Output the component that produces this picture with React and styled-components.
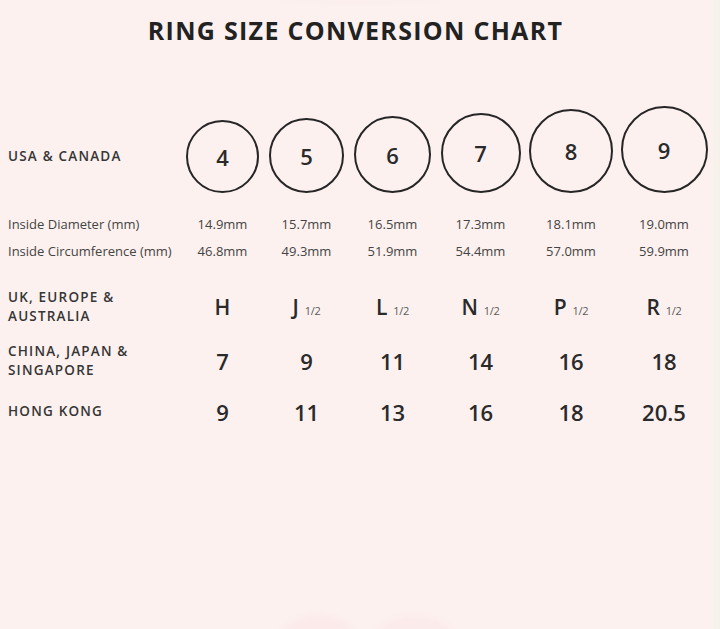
import React from 'react';
import styled, { createGlobalStyle } from 'styled-components';

const GlobalStyle = createGlobalStyle`
    html, body {
        margin: 0;
        padding: 0;
    }
    body {
        font-family: "Open Sans", "Liberation Sans", sans-serif;
        color: #2a2a2a;
    }
`;

const COLUMNS = '181px 83px 85px 87px 89px 92px 94px';

const Page = styled.div`
    width: 720px;
    height: 629px;
    overflow: hidden;
    display: flex;
    background:
        linear-gradient(to right, transparent 713px, #f7f1ec 713px),
        radial-gradient(ellipse 50px 42px at 318px 652px, #fbeae9 0%, #fbeae9 75%, rgba(251, 234, 233, 0) 100%),
        radial-gradient(ellipse 55px 44px at 414px 654px, #fbebea 0%, #fbebea 75%, rgba(251, 235, 234, 0) 100%),
        radial-gradient(ellipse 110px 8px at 360px 0px, #fbeeec 0%, rgba(251, 238, 236, 0) 100%),
        #fcf1ef;
`;

const Chart = styled.div`
    width: 713px;
    display: flex;
    flex-direction: column;
`;

const Title = styled.h1`
    margin: 15px 0 0;
    text-align: center;
    font-family: "Open Sans", "Liberation Sans", sans-serif;
    font-weight: 700;
    font-size: 25px;
    line-height: 30px;
    letter-spacing: 1.3px;
    color: #222;
    padding-right: 2px;
`;

const Row = styled.div`
    display: grid;
    grid-template-columns: ${COLUMNS};
    align-items: ${p => p.$align || 'center'};
    height: ${p => p.$height}px;
    margin-top: ${p => p.$gap}px;
`;

const Label = styled.div`
    padding-left: 8px;
    font-size: 13.5px;
    line-height: 18.5px;
    font-weight: 600;
    color: #363636;
    letter-spacing: 1.2px;
    white-space: nowrap;
`;

const CircleLabel = styled(Label)`
    align-self: end;
    height: 73px;
    display: flex;
    align-items: center;
`;

const Cell = styled.div`
    display: flex;
    justify-content: center;
    align-items: center;
`;

const Ring = styled.div`
    width: ${p => p.$size}px;
    height: ${p => p.$size}px;
    box-sizing: border-box;
    border: 2.5px solid #262626;
    border-radius: 50%;
    display: flex;
    align-items: center;
    justify-content: center;
    font-size: 22px;
    font-weight: 600;
    color: #2a2a2a;
`;

const SmallLabel = styled.div`
    padding-left: 8px;
    font-size: 13px;
    color: #444;
    white-space: nowrap;
`;

const Measure = styled.div`
    text-align: center;
    font-size: 13px;
    color: #444;
`;

const Size = styled.div`
    display: flex;
    justify-content: center;
    align-items: baseline;
    font-size: ${p => p.$size || 22}px;
    font-weight: 600;
    color: #2a2a2a;
`;

const Half = styled.span`
    font-size: 11px;
    font-weight: 400;
    color: #5a5a5a;
    margin-left: 6px;
    letter-spacing: -0.3px;
`;

const rings = [
    { us: '4', size: 73, dia: '14.9mm', circ: '46.8mm', uk: 'H', half: false, cn: '7', hk: '9' },
    { us: '5', size: 75, dia: '15.7mm', circ: '49.3mm', uk: 'J', half: true, cn: '9', hk: '11' },
    { us: '6', size: 77, dia: '16.5mm', circ: '51.9mm', uk: 'L', half: true, cn: '11', hk: '13' },
    { us: '7', size: 80, dia: '17.3mm', circ: '54.4mm', uk: 'N', half: true, cn: '14', hk: '16' },
    { us: '8', size: 84, dia: '18.1mm', circ: '57.0mm', uk: 'P', half: true, cn: '16', hk: '18' },
    { us: '9', size: 87, dia: '19.0mm', circ: '59.9mm', uk: 'R', half: true, cn: '18', hk: '20.5' },
];

const App = () => {
    return (
        <Page>
            <GlobalStyle />
            <Chart>
                <Title>RING SIZE CONVERSION CHART</Title>

                <Row $height={87} $gap={61} $align="end">
                    <CircleLabel>USA &amp; CANADA</CircleLabel>
                    {rings.map(r => (
                        <Cell key={r.us}>
                            <Ring $size={r.size}>{r.us}</Ring>
                        </Cell>
                    ))}
                </Row>

                <Row $height={27} $gap={17}>
                    <SmallLabel>Inside Diameter (mm)</SmallLabel>
                    {rings.map(r => <Measure key={r.dia}>{r.dia}</Measure>)}
                </Row>
                <Row $height={27} $gap={0}>
                    <SmallLabel>Inside Circumference (mm)</SmallLabel>
                    {rings.map(r => <Measure key={r.circ}>{r.circ}</Measure>)}
                </Row>

                <Row $height={37} $gap={24}>
                    <Label>UK, EUROPE &amp;<br />AUSTRALIA</Label>
                    {rings.map(r => (
                        <Size key={r.uk} $size={21}>
                            {r.uk}
                            {r.half && <Half>1/2</Half>}
                        </Size>
                    ))}
                </Row>

                <Row $height={37} $gap={17}>
                    <Label>CHINA, JAPAN &amp;<br />SINGAPORE</Label>
                    {rings.map(r => <Size key={r.us}>{r.cn}</Size>)}
                </Row>

                <Row $height={37} $gap={14}>
                    <Label>HONG KONG</Label>
                    {rings.map(r => <Size key={r.us}>{r.hk}</Size>)}
                </Row>
            </Chart>
        </Page>
    );
};

export default App;
